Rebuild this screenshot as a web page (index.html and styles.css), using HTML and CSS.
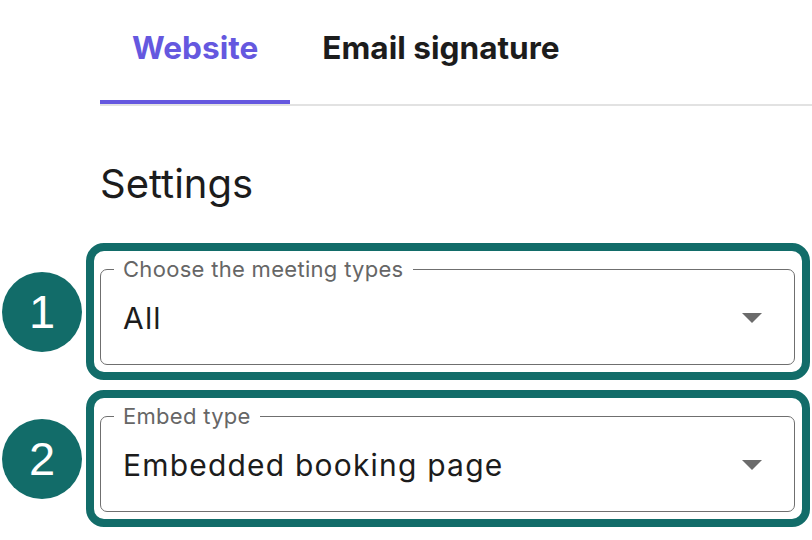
FILE: index.html
```html
<!DOCTYPE html>
<html lang="en">
<head>
<meta charset="utf-8">
<title>Embed settings</title>
<link rel="stylesheet" href="styles.css">
</head>
<body>
<nav class="tabs">
  <div class="tab active">Website</div>
  <div class="tab">Email signature</div>
</nav>
<h2 class="section-title">Settings</h2>
<div class="rows">
  <div class="row">
    <div class="step">1</div>
    <div class="outline">
      <fieldset class="field">
        <legend class="field-label">Choose the meeting types</legend>
        <div class="field-value">
          <span>All</span>
          <svg class="caret" viewBox="0 0 20 10" width="20" height="10"><polygon points="0,0 20,0 10,10" fill="#6b6b6b"/></svg>
        </div>
      </fieldset>
    </div>
  </div>
  <div class="row">
    <div class="step">2</div>
    <div class="outline">
      <fieldset class="field">
        <legend class="field-label">Embed type</legend>
        <div class="field-value">
          <span>Embedded booking page</span>
          <svg class="caret" viewBox="0 0 20 10" width="20" height="10"><polygon points="0,0 20,0 10,10" fill="#6b6b6b"/></svg>
        </div>
      </fieldset>
    </div>
  </div>
</div>
</body>
</html>
```
FILE: styles.css
```css
html, body {
  margin: 0;
  padding: 0;
  background: #ffffff;
}
body {
  font-family: Inter, "Noto Sans", "Liberation Sans", sans-serif;
  color: #1c1c1c;
  width: 812px;
  overflow: hidden;
}
.tabs {
  display: flex;
  margin-left: 100px;
  border-bottom: 2px solid #e2e2e2;
}
.tab {
  box-sizing: border-box;
  height: 104px;
  padding: 0 32px 9px;
  display: flex;
  align-items: center;
  font-size: 31.6px;
  font-weight: 700;
  color: #1c1c1c;
}
.tab.active {
  color: #6558df;
  border-bottom: 4px solid #6558df;
  padding-bottom: 5px;
  padding-right: 32px;
}
.section-title {
  margin: 54px 0 0 100px;
  font-size: 40px;
  font-weight: 400;
  line-height: 48px;
  color: #1c1c1c;
}
.rows {
  margin-top: 35px;
  display: flex;
  flex-direction: column;
  gap: 10px;
}
.row {
  display: flex;
  align-items: center;
  gap: 4px;
  padding-left: 2px;
}
.step {
  width: 80px;
  height: 80px;
  border-radius: 50%;
  background: #126c69;
  color: #ffffff;
  display: flex;
  align-items: center;
  justify-content: center;
  font-family: "Liberation Sans", Arial, sans-serif;
  font-size: 47px;
  line-height: 1;
  flex: none;
}
.outline {
  flex: 1;
  box-sizing: border-box;
  border: 8px solid #126c69;
  border-radius: 18px;
  padding: 5px 7px 7px 6px;
  margin-right: 2px;
}
.field {
  margin: 0;
  box-sizing: border-box;
  min-width: 0;
  height: 109px;
  border: 1.5px solid #6f6f6f;
  border-radius: 7px;
  padding: 0 32px 0 13px;
}
.field-label {
  padding: 0 9px;
  font-size: 22px;
  letter-spacing: 0.3px;
  line-height: 26px;
  color: #666666;
}
.field-value {
  display: flex;
  align-items: center;
  justify-content: space-between;
  height: 72px;
  padding-left: 9px;
  font-size: 30px;
  letter-spacing: 1.2px;
  color: #1c1c1c;
}
.caret {
  display: block;
  margin-top: -1px;
}
```
